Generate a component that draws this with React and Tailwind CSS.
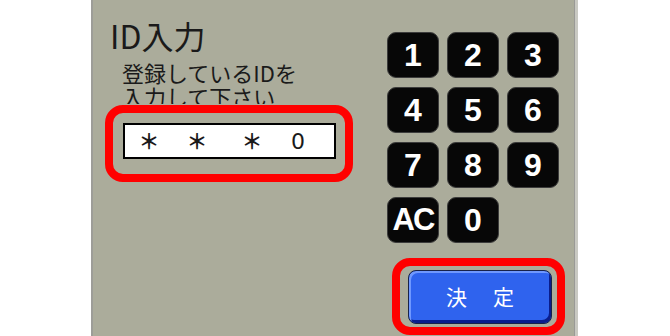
import React from "react";

const keys = ["1", "2", "3", "4", "5", "6", "7", "8", "9", "AC", "0"];

export default function App() {
  return (
    <div className="w-[670px] h-[336px] bg-white flex pl-[91px] overflow-hidden">
      <div className="w-[487px] h-[336px] bg-[#abac9b] border-l-2 border-l-[#9d9d98] flex" style={{ boxShadow: "inset -3px 0 0 #c9c9c2, inset -4px 0 0 #9a9a96" }}>
        {/* left column */}
        <div className="w-[294px] pl-[12px] flex flex-col" style={{ fontFamily: '"Noto Sans CJK JP", "Noto Sans", sans-serif' }}>
          <div className="mt-[17px] ml-[5px] text-[32px] leading-[36px] text-[#1a1a1a]">ID入力</div>
          <div className="mt-[7px] ml-[17px] text-[22px] leading-[24px] text-[#1a1a1a]">
            <div>登録しているIDを</div>
            <div className="h-[20px] overflow-hidden">入力して下さい</div>
          </div>
          <div className="mt-[1px] w-[248px] h-[77px] border-[8px] border-[#ff0000] rounded-[18px] pl-[10px] pt-[10px]">
            <div className="w-[213px] h-[36px] bg-white border-2 border-black flex items-center text-[#1a1a1a]">
              <span className="w-[48px] text-center text-[21px] font-bold">＊</span>
              <span className="w-[48px] text-center text-[21px] font-bold">＊</span>
              <span className="w-[62px] text-center text-[21px] font-bold">＊</span>
              <span className="w-[30px] text-center text-[22px]" style={{ fontFamily: '"DejaVu Sans", sans-serif' }}>0</span>
            </div>
          </div>
        </div>
        {/* right column */}
        <div className="flex flex-col pt-[32px]">
          <div className="grid grid-cols-[52px_52px_52px] gap-x-[8px] gap-y-[9px]">
            {keys.map((k) => (
              <div
                key={k}
                className="h-[46px] bg-[#070707] border border-[#3c3c3c] rounded-[9px] flex items-center justify-center text-white font-bold"
                style={{ fontFamily: '"Liberation Sans", Arial, sans-serif' }}
              >
                <span className={k === "AC" ? "text-[31px] tracking-[-2px]" : "text-[32px]"}>{k}</span>
              </div>
            ))}
          </div>
          <div className="mt-[15px] ml-[5px] w-[173px] h-[77px] border-[8px] border-[#ff0000] rounded-[18px] pl-[8px] pt-[4px]">
            <div
              className="w-[144px] h-[54px] rounded-[8px] bg-[#2f63ee] border border-[#18224a] flex items-center justify-center gap-[26px] text-white text-[21px]"
              style={{
                fontFamily: '"Noto Sans CJK JP", sans-serif',
                boxShadow: "inset 2px 2px 0 #6f98ff, inset -2px -3px 0 #0a1d8c",
              }}
            >
              <span>決</span>
              <span>定</span>
            </div>
          </div>
        </div>
      </div>
    </div>
  );
}
